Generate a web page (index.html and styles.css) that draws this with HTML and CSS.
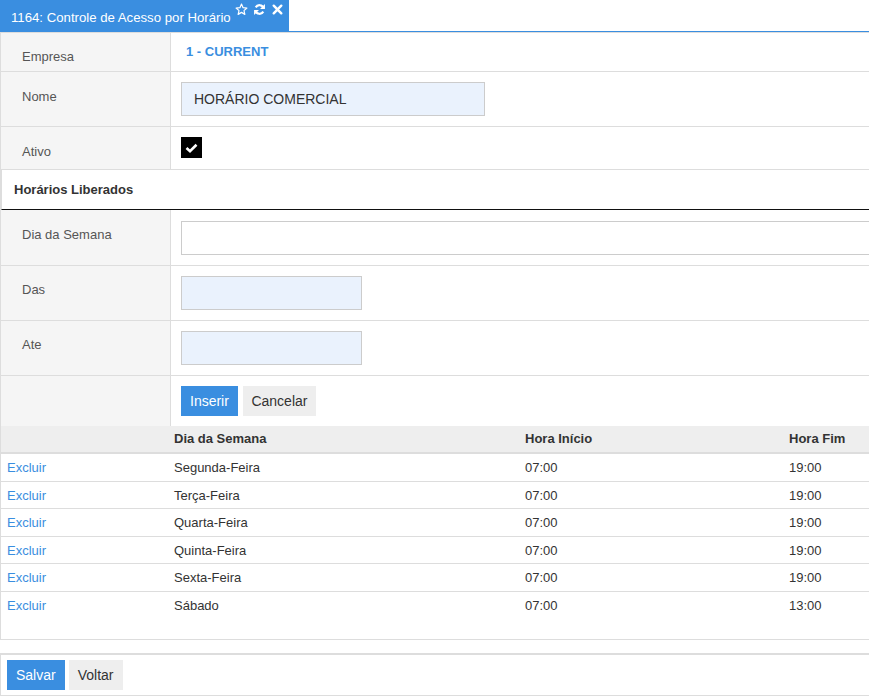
FILE: index.html
```html
<!DOCTYPE html>
<html lang="pt">
<head>
<meta charset="utf-8">
<title>1164: Controle de Acesso por Horário</title>
<link rel="stylesheet" href="styles.css">
</head>
<body>
<div class="tabbar">
  <div class="tab">
    <span class="tab-title">1164: Controle de Acesso por Horário</span>
    <span class="tab-icons">
      <svg class="ico" width="13" height="13" viewBox="0 0 24 24"><polygon points="12,2 14.9,8.6 22,9.3 16.6,14 18.2,21 12,17.3 5.8,21 7.4,14 2,9.3 9.1,8.6" fill="none" stroke="#fff" stroke-width="2.2" stroke-linejoin="round"/></svg>
      <svg class="ico" width="13" height="13" viewBox="0 0 24 24"><path d="M19.5 9.5A8 8 0 0 0 5 8" fill="none" stroke="#fff" stroke-width="4"/><polygon points="22,2 22,11 13,11" fill="#fff"/><path d="M4.5 14.5A8 8 0 0 0 19 16" fill="none" stroke="#fff" stroke-width="4"/><polygon points="2,22 2,13 11,13" fill="#fff"/></svg>
      <svg class="ico" width="13" height="13" viewBox="0 0 24 24"><path d="M5 5L19 19M19 5L5 19" stroke="#fff" stroke-width="4.5" stroke-linecap="round"/></svg>
    </span>
  </div>
</div>

<div class="form">
  <div class="row row-empresa">
    <div class="label">Empresa</div>
    <div class="value"><span class="company">1 - CURRENT</span></div>
  </div>
  <div class="row">
    <div class="label">Nome</div>
    <div class="value"><div class="input input-nome">HORÁRIO COMERCIAL</div></div>
  </div>
  <div class="row row-ativo">
    <div class="label">Ativo</div>
    <div class="value">
      <span class="checkbox"><svg width="13" height="10" viewBox="0 0 13 10"><path d="M1.5 5L5 8.2L11.5 1.8" fill="none" stroke="#fff" stroke-width="2.6"/></svg></span>
    </div>
  </div>

  <div class="section">Horários Liberados</div>

  <div class="row row-dia">
    <div class="label">Dia da Semana</div>
    <div class="value"><div class="input input-dia input-white"></div></div>
  </div>
  <div class="row row-time">
    <div class="label">Das</div>
    <div class="value"><div class="input input-short"></div></div>
  </div>
  <div class="row row-time">
    <div class="label">Ate</div>
    <div class="value"><div class="input input-short"></div></div>
  </div>
  <div class="row row-buttons">
    <div class="label"></div>
    <div class="value buttons">
      <button class="btn btn-primary">Inserir</button>
      <button class="btn btn-default btn-cancel">Cancelar</button>
    </div>
  </div>

  <div class="grid-wrap">
    <table class="grid">
      <colgroup>
        <col class="c1"><col class="c2"><col class="c3"><col class="c4">
      </colgroup>
      <thead>
        <tr><th></th><th>Dia da Semana</th><th>Hora Início</th><th>Hora Fim</th></tr>
      </thead>
      <tbody>
        <tr><td><a href="#">Excluir</a></td><td>Segunda-Feira</td><td>07:00</td><td>19:00</td></tr>
        <tr><td><a href="#">Excluir</a></td><td>Terça-Feira</td><td>07:00</td><td>19:00</td></tr>
        <tr><td><a href="#">Excluir</a></td><td>Quarta-Feira</td><td>07:00</td><td>19:00</td></tr>
        <tr><td><a href="#">Excluir</a></td><td>Quinta-Feira</td><td>07:00</td><td>19:00</td></tr>
        <tr><td><a href="#">Excluir</a></td><td>Sexta-Feira</td><td>07:00</td><td>19:00</td></tr>
        <tr class="last"><td><a href="#">Excluir</a></td><td>Sábado</td><td>07:00</td><td>13:00</td></tr>
      </tbody>
    </table>
  </div>
</div>

<div class="footer">
  <button class="btn btn-primary">Salvar</button>
  <button class="btn btn-default">Voltar</button>
</div>
</body>
</html>
```

FILE: styles.css
```css
html, body {
  margin: 0;
  padding: 0;
  background: #fff;
  overflow: hidden;
}
body {
  width: 869px;
  font-family: "Liberation Sans", Arial, sans-serif;
  font-size: 13px;
  color: #333;
}

.tabbar {
  display: flex;
  border-bottom: 1px solid #3a8ee0;
  height: 31px;
}
.tab {
  width: 289px;
  background: #3a8ee0;
  color: #fff;
  display: flex;
  align-items: flex-start;
  box-sizing: border-box;
  padding-left: 11px;
}
.tab-title {
  font-size: 13.2px;
  line-height: 15px;
  padding-top: 10px;
}
.tab-icons {
  display: flex;
  gap: 5px;
  padding-top: 3px;
  padding-left: 4px;
}
.ico {
  display: block;
}

.form {
  border-left: 1px solid #ddd;
  border-top: 1px solid #ddd;
}
.row {
  display: grid;
  grid-template-columns: 170px 1fr;
  border-bottom: 1px solid #ddd;
}
.label {
  background: #f5f5f5;
  border-right: 1px solid #ddd;
  color: #555;
  padding: 17px 0 0 21px;
  line-height: 16px;
}
.value {
  padding: 10px 0 10px 10px;
  min-width: 0;
}
.row-empresa .label {
  padding-top: 16px;
}
.row-empresa .value {
  padding: 11px 0 11px 15px;
  line-height: 16px;
  height: 16px;
}
.company {
  color: #3a8ee0;
  font-weight: bold;
  font-size: 13px;
}
.row-ativo .value {
  padding-bottom: 11px;
}
.row-dia .value {
  padding-top: 11px;
}
.row-time .label {
  padding-top: 16px;
}

.input {
  box-sizing: border-box;
  height: 34px;
  border: 1px solid #ccc;
  background: #eaf2fd;
  font-size: 14px;
  line-height: 32px;
  padding: 0 12px;
  color: #333;
}
.input-nome { width: 304px; }
.input-short { width: 181px; }
.input-dia { width: 720px; }
.input-white { background: #fff; }

.checkbox {
  display: flex;
  align-items: center;
  justify-content: center;
  width: 21px;
  height: 21px;
  background: #000;
}

.section {
  box-sizing: border-box;
  height: 40px;
  padding-top: 1px;
  line-height: 38px;
  padding-left: 12px;
  font-weight: bold;
  color: #333;
  border-bottom: 1px solid #111;
  border-left: 1px solid #ddd;
}

.row-buttons {
  border-bottom: none;
}
.buttons {
  display: flex;
  gap: 5px;
}
.btn {
  font-family: "Liberation Sans", Arial, sans-serif;
  font-size: 14px;
  height: 30px;
  padding: 0 9px;
  border: none;
  margin: 0;
  cursor: pointer;
}
.btn-cancel {
  padding: 0 8.5px;
}
.btn-primary {
  background: #3a8ee0;
  color: #fff;
}
.btn-default {
  background: #eee;
  color: #333;
}

.grid-wrap {
  border-bottom: 1px solid #ddd;
  padding-bottom: 20px;
}
.grid {
  border-collapse: collapse;
  table-layout: fixed;
  width: 950px;
}
.c1 { width: 167px; }
.c2 { width: 351px; }
.c3 { width: 264px; }
.c4 { width: 168px; }
.grid th {
  background: #eee;
  text-align: left;
  font-weight: bold;
  color: #333;
  padding: 5px 6px;
  height: 16px;
  line-height: 16px;
  border-bottom: 2px solid #ddd;
}
.grid td {
  padding: 6px 6px 4px;
  line-height: 16.6px;
  border-bottom: 1px solid #ddd;
  color: #333;
}
.grid tr.last td {
  border-bottom: none;
}
.grid a {
  color: #3a8ee0;
  text-decoration: none;
}

.footer {
  margin-top: 13px;
  border-top: 2px solid #ddd;
  border-bottom: 1px solid #ddd;
  border-left: 1px solid #ddd;
  padding: 5px 0 5px 6px;
  display: flex;
  gap: 4px;
}
```
